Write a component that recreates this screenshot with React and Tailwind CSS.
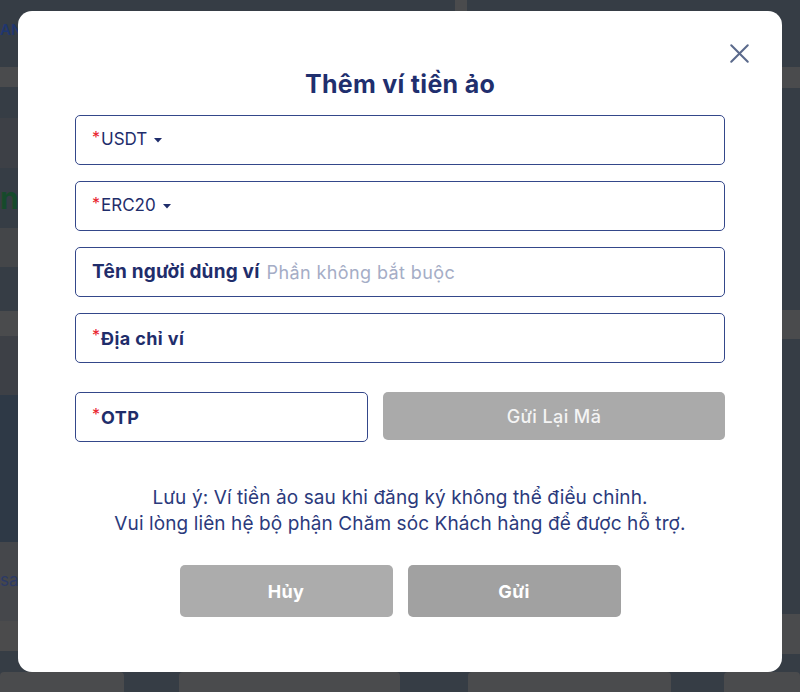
import { X } from 'lucide-react';

const Caret = () => (
    <svg width="8" height="5" viewBox="0 0 8 5" className="ml-[7px] mt-[1px]">
        <path d="M0 0 L8 0 L4 4.5 Z" fill="#1f2d6b" />
    </svg>
);

// red required mark, sits high next to the label
const Req = () => <span className="text-[#e8202a] text-[16px] leading-none -translate-y-[3px] mr-[1px]">*</span>;

const Field = ({ children, className = '' }) => (
    <div className={`flex items-center h-[50px] px-4 border border-[#34478a] rounded-[5px] bg-white ${className}`}>
        {children}
    </div>
);

const Backdrop = () => (
    <div className="flex h-[692px] w-full bg-[#363d45] overflow-hidden">
        <div className="flex flex-col w-[400px] text-[#1f3670]">
            <div className="h-[20px]" />
            <div className="h-[20px] text-[15px] leading-[20px] font-semibold">AN</div>
            <div className="h-[28px]" />
            <div className="h-[20px] bg-[#4a4b4d]" />
            <div className="h-[32px]" />
            <div className="h-[50px] bg-[#3d4046]" />
            <div className="h-[60px] text-[30px] leading-[60px] text-[#164a2b] font-bold">n</div>
            <div className="h-[40px] bg-[#444649]" />
            <div className="h-[45px]" />
            <div className="h-[25px] bg-[#4a4b4d]" />
            <div className="h-[60px] bg-[#3d4046]" />
            <div className="h-[150px] bg-[#2e3946]" />
            <div className="h-[80px] bg-[#45474b] text-[17px] leading-[76px] text-[#2c3a66]">sa</div>
            <div className="h-[30px] bg-[#4b4b4c]" />
            <div className="h-[22px]" />
            <div className="flex gap-[55px] h-[20px]">
                <div className="w-[130px] bg-[#4a4b4d] rounded-t-[4px]" />
                <div className="w-[233px] bg-[#4a4b4d] rounded-t-[4px]" />
            </div>
        </div>
        <div className="flex flex-col w-[400px]">
            <div className="flex h-[68px]">
                <div className="w-[55px]" />
                <div className="w-[12px] h-[12px] bg-[#4a4b4d]" />
            </div>
            <div className="h-[22px] bg-[#4a4b4d]" />
            <div className="h-[225px]" />
            <div className="h-[30px] bg-[#4a4b4d]" />
            <div className="h-[280px]" />
            <div className="h-[40px] bg-[#4a4b4d]" />
            <div className="h-[19px]" />
            <div className="flex gap-[53px] h-[20px]">
                <div className="w-[18px]" />
                <div className="w-[240px] bg-[#4a4b4d] rounded-t-[4px]" />
                <div className="w-[90px] bg-[#4a4b4d] rounded-t-[4px]" />
            </div>
        </div>
    </div>
);

export default function App() {
    return (
        <div className="relative w-[800px] h-[692px] overflow-hidden" style={{ fontFamily: 'Inter, "Noto Sans", sans-serif' }}>
            <Backdrop />

            <div className="absolute left-[18px] top-[11px] w-[764px] h-[661px] bg-white rounded-[14px] flex flex-col items-center pt-[56px] px-[57px]">
                <button className="absolute right-[26px] top-[26px] text-[#5b6a8c]">
                    <X size={33} strokeWidth={1.5} />
                </button>

                <h2 className="text-[25px] leading-[34px] font-bold tracking-[0.3px] text-[#1f2f6e]">Thêm ví tiền ảo</h2>

                <div className="w-full flex flex-col gap-4 mt-[14px] text-[17px] text-[#1f2d6b]">
                    <Field>
                        <Req />
                        <span>USDT</span>
                        <Caret />
                    </Field>
                    <Field>
                        <Req />
                        <span>ERC20</span>
                        <Caret />
                    </Field>
                    <Field>
                        <span className="font-bold text-[19px] tracking-[0.2px]">Tên người dùng ví</span>
                        <span className="ml-[7px] text-[18px] tracking-[0.4px] text-[#a5adc6]">Phần không bắt buộc</span>
                    </Field>
                    <Field>
                        <Req />
                        <span className="font-bold text-[18px] tracking-[0.4px]">Địa chỉ ví</span>
                    </Field>
                </div>

                <div className="w-full flex gap-[15px] mt-[29px]">
                    <Field className="w-[293px] h-[49px] text-[#1f2d6b]">
                        <Req />
                        <span className="font-bold text-[18px] tracking-[0.4px]">OTP</span>
                    </Field>
                    <button className="flex-1 h-[48px] rounded-[5px] bg-[#aaaaaa] text-[#f4f4f4] text-[18px] tracking-[0.4px] font-medium">
                        Gửi Lại Mã
                    </button>
                </div>

                <p className="mt-[43px] text-center text-[19px] leading-[26px] tracking-[0.1px] text-[#2b3a7c]">
                    Lưu ý: Ví tiền ảo sau khi đăng ký không thể điều chỉnh.
                    <br />
                    Vui lòng liên hệ bộ phận Chăm sóc Khách hàng để được hỗ trợ.
                </p>

                <div className="flex gap-[15px] mt-[28px]">
                    <button className="w-[213px] h-[52px] rounded-[5px] bg-[#acacac] text-white text-[18px] tracking-[0.4px] font-bold">Hủy</button>
                    <button className="w-[213px] h-[52px] rounded-[5px] bg-[#a1a1a1] text-white text-[18px] tracking-[0.4px] font-bold">Gửi</button>
                </div>
            </div>
        </div>
    );
}
